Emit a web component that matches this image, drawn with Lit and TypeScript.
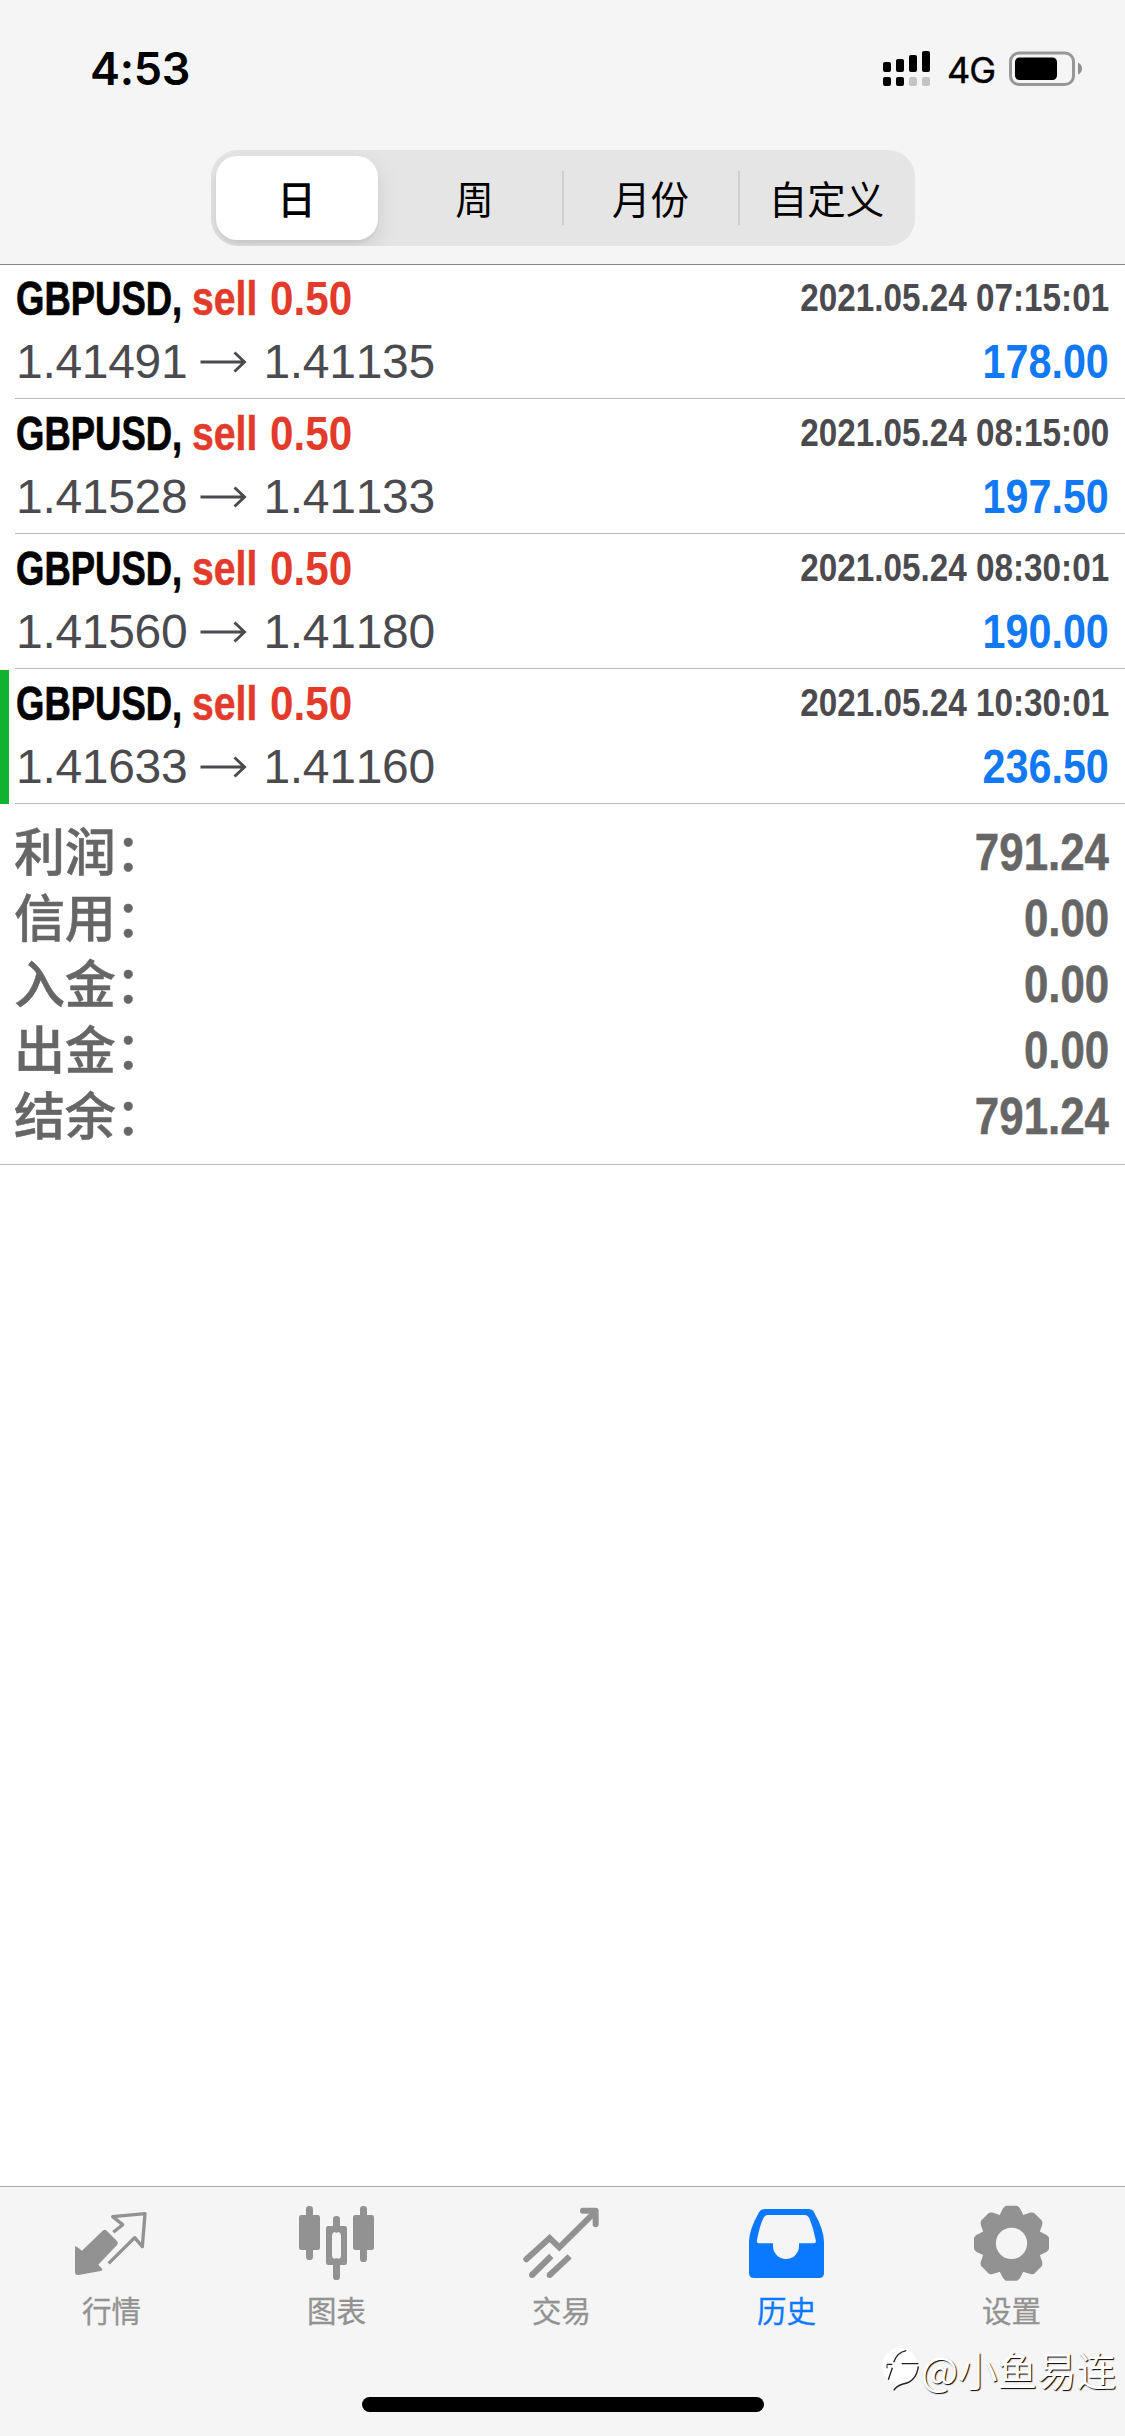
import { LitElement, html, svg, css } from "lit";
import { customElement, property } from "lit/decorators.js";
import { classMap } from "lit/directives/class-map.js";

interface Trade {
  symbol: string;
  side: string;
  volume: string;
  time: string;
  open: string;
  close: string;
  profit: string;
  marked?: boolean;
}

const TRADES: Trade[] = [
  { symbol: "GBPUSD,", side: "sell", volume: "0.50", time: "2021.05.24 07:15:01", open: "1.41491", close: "1.41135", profit: "178.00" },
  { symbol: "GBPUSD,", side: "sell", volume: "0.50", time: "2021.05.24 08:15:00", open: "1.41528", close: "1.41133", profit: "197.50" },
  { symbol: "GBPUSD,", side: "sell", volume: "0.50", time: "2021.05.24 08:30:01", open: "1.41560", close: "1.41180", profit: "190.00" },
  { symbol: "GBPUSD,", side: "sell", volume: "0.50", time: "2021.05.24 10:30:01", open: "1.41633", close: "1.41160", profit: "236.50", marked: true },
];

const SUMMARY = [
  ["利润：", "791.24"],
  ["信用：", "0.00"],
  ["入金：", "0.00"],
  ["出金：", "0.00"],
  ["结余：", "791.24"],
];

const PERIODS = ["日", "周", "月份", "自定义"];

@customElement("status-bar")
class StatusBar extends LitElement {
  static styles = css`
    :host { display: flex; justify-content: space-between; align-items: center; height: 138px; padding: 0 42px 0 90px; box-sizing: border-box; color: #000; }
    .time { font: 600 45px/60px Inter, sans-serif; letter-spacing: -0.3px; }
    .right { display: flex; align-items: center; }
    .network { font: 400 36px/40px Inter, sans-serif; margin: 1px 14px 0 16px; letter-spacing: -1px; -webkit-text-stroke: 0.4px #000; }
    svg { display: block; }
  `;
  render() {
    return html`
      <span class="time">4:53</span>
      <div class="right">
        <svg width="48" height="36" viewBox="0 0 48 36">
          <rect x="0" y="11" width="8" height="10" rx="2" />
          <rect x="13" y="8" width="8" height="13" rx="2" />
          <rect x="26" y="4" width="8" height="17" rx="2" />
          <rect x="39" y="0" width="8" height="21" rx="2" />
          <rect x="0" y="26" width="8" height="9" rx="2" />
          <rect x="13" y="26" width="8" height="9" rx="2" />
          <rect x="26" y="26" width="8" height="9" rx="2" fill="#c4c4c4" />
          <rect x="39" y="26" width="8" height="9" rx="2" fill="#c4c4c4" />
        </svg>
        <span class="network">4G</span>
        <svg width="74" height="36" viewBox="0 0 74 36">
          <rect x="1.5" y="2" width="63" height="31.5" rx="8.5" fill="none" stroke="#979797" stroke-width="3" />
          <rect x="6" y="6.5" width="42" height="22.5" rx="4.5" />
          <path d="M69 11.5q4 2 4 6t-4 6z" fill="#8f8f8f" />
        </svg>
      </div>
    `;
  }
}

@customElement("period-switch")
class PeriodSwitch extends LitElement {
  @property({ type: Number }) selected = 0;
  static styles = css`
    :host { display: grid; grid-template-columns: repeat(4, 1fr); width: 704px; height: 96px; margin: 0 auto; border-radius: 27px; background: #e5e5e6; overflow: hidden; }
    .segment { display: flex; align-items: center; justify-content: center; position: relative; font: 400 38.5px/44px "Noto Sans CJK SC", sans-serif; color: #000; }
    .label { margin-bottom: 3px; }
    .selected { margin: 6px 9px 6px 5px; border-radius: 21px; background: #fff; font-weight: 500; box-shadow: 0 9px 24px rgba(0, 0, 0, 0.1), 0 3px 3px rgba(0, 0, 0, 0.05); }
    .divided::before { content: ""; position: absolute; left: -1px; top: 21px; bottom: 21px; width: 2px; background: #cfcfd2; }
  `;
  render() {
    return PERIODS.map(
      (name, i) => html`<div class=${classMap({ segment: true, selected: i === this.selected, divided: i > this.selected + 1 })}>
        <span class="label">${name}</span>
      </div>`
    );
  }
}

@customElement("trade-row")
class TradeRow extends LitElement {
  @property({ attribute: false }) trade!: Trade;
  static styles = css`
    :host { display: block; height: 135px; padding-left: 15px; box-sizing: border-box; font-family: "Liberation Sans", Arial, sans-serif; font-kerning: none; }
    :host([marked]) { background: linear-gradient(#0fb32f, #0fb32f) 0 1px / 9px 134px no-repeat; }
    .body { height: 135px; padding: 3px 16px 0 1px; box-sizing: border-box; border-bottom: 1px solid #b8b8ba; }
    .line { display: flex; justify-content: space-between; height: 63px; line-height: 63px; font-size: 48px; white-space: nowrap; }
    .title { display: flex; font-weight: 700; }
    .symbol { width: 175.5px; transform: scaleX(0.76); transform-origin: left; -webkit-text-stroke: 0.7px #000; }
    .side { width: 78px; color: #e33b2b; transform: scaleX(0.815); transform-origin: left; -webkit-text-stroke: 0.5px #e33b2b; }
    .volume { color: #e33b2b; transform: scaleX(0.88); transform-origin: left; }
    .time { font-size: 39px; line-height: 61px; font-weight: 700; color: #4b4b4f; transform: scaleX(0.853); transform-origin: right; }
    .prices { display: flex; align-items: center; color: #4b4b4f; letter-spacing: -0.3px; }
    .arrow { margin: 0 15px 0 13px; }
    .profit { font-weight: 700; color: #1279f5; transform: scaleX(0.86); transform-origin: right; }
  `;
  render() {
    const t = this.trade;
    return html`<div class="body">
      <div class="line">
        <div class="title"><span class="symbol">${t.symbol}</span><span class="side">${t.side}</span><span class="volume">${t.volume}</span></div>
        <span class="time">${t.time}</span>
      </div>
      <div class="line">
        <div class="prices">
          <span>${t.open}</span>
          <svg class="arrow" width="48" height="22" viewBox="0 0 48 22" fill="none" stroke="#4b4b4f" stroke-width="2.9">
            <path d="M0.500 11H45M34.500 1.500L44.500 11L34.500 20.500" />
          </svg>
          <span>${t.close}</span>
        </div>
        <span class="profit">${t.profit}</span>
      </div>
    </div>`;
  }
}

const TEETH = [0, 45, 90, 135, 180, 225, 270, 315];

/* Each glyph is drawn in thirds of a pixel inside a 225-unit square. */
const TABS = [
  {
    label: "行情",
    box: "105 108 225 225",
    art: svg`
      <path fill="currentColor" d="M105 232Q105 226 110 230L126 242L188 182Q194 177 200 182L231 213Q236 219 231 225L175 284L186 296Q189 302 182 303L116 315Q105 316 105 306Z" />
      <path fill="none" stroke="currentColor" stroke-width="10" stroke-linejoin="round" d="M220 187L248 164L218 140L315 131L307 230L284 203L206 280" />`,
  },
  {
    label: "图表",
    box: "780 108 225 225",
    art: svg`
      <g fill="currentColor">
        <rect x="798" y="108" width="21" height="162" rx="10" />
        <rect x="777" y="135" width="63" height="105" rx="7" />
        <rect x="960" y="108" width="21" height="168" rx="10" />
        <rect x="939" y="135" width="63" height="105" rx="7" />
        <rect x="879" y="138" width="21" height="50" rx="10" />
        <rect x="879" y="265" width="21" height="65" rx="10" />
        <path fill-rule="evenodd" d="M865 168H914Q921 168 921 175V278Q921 285 914 285H865Q858 285 858 278V175Q858 168 865 168ZM889.500 185Q876 185 876 198V255Q876 268 889.500 268T903 255V198Q903 185 889.500 185Z" />
      </g>`,
  },
  {
    label: "交易",
    box: "136 108 225 225",
    art: svg`
      <g fill="none" stroke="currentColor" stroke-width="18">
        <path stroke-linecap="round" stroke-linejoin="miter" d="M140 268L210 204L239 232L345 127" />
        <path stroke-linecap="round" stroke-linejoin="round" d="M310 122H348V163" />
        <path d="M157 315L215 258M210 315L270 259" />
      </g>
      <circle cx="157" cy="315" r="9" fill="currentColor" />
      <circle cx="210" cy="315" r="9" fill="currentColor" />`,
  },
  {
    label: "历史",
    box: "810 108 225 225",
    active: true,
    art: svg`
      <path fill="currentColor" fill-rule="evenodd" d="M855 117H985Q997 117 1002 127Q1032 180 1032 215V309Q1032 324 1017 324H822Q807 324 807 309V215Q807 180 837 127Q842 117 855 117ZM864 135Q855 135 850 145Q840 165 831 209Q828 220 840 220H879V228A39 39 0 0 0 957 228V220H1000Q1010 220 1007 209Q1000 175 989 147Q984 135 974 135Z" />`,
  },
  {
    label: "设置",
    box: "375 108 225 225",
    art: svg`
      <g transform="translate(484.500 220)" stroke="currentColor">
        <circle r="68.500" fill="none" stroke-width="43" />
        ${TEETH.map((a) => svg`<path transform=${`rotate(${a})`} fill="currentColor" stroke-width="14" stroke-linejoin="round" d="M-15 -105.500H15Q20 -103 24 -92L32 -76H-32L-24 -92Q-20 -103 -15 -105.500Z" />`)}
      </g>`,
  },
];

@customElement("tab-bar")
class TabBar extends LitElement {
  static styles = css`
    :host { display: flex; flex-direction: column; align-items: center; height: 250px; background: #f5f5f5; border-top: 1px solid #a8a8a8; box-sizing: border-box; }
    .tabs { display: grid; grid-template-columns: repeat(5, 1fr); width: 100%; height: 210px; }
    .tab { display: flex; flex-direction: column; align-items: center; padding-top: 19px; color: #929292; }
    .active { color: #0b79fd; }
    .icon { display: block; overflow: visible; }
    .label { margin: 13px 2px 0 0; font: 400 29.5px/30px "Noto Sans CJK SC", sans-serif; -webkit-text-stroke: 0.3px currentColor; }
    .home { width: 402px; height: 15px; border-radius: 8px; background: #000; }
  `;
  render() {
    return html`
      <div class="tabs">
        ${TABS.map(
          (t) => html`<div class=${classMap({ tab: true, active: !!t.active })}>
            <svg class="icon" width="75" height="75" viewBox=${t.box}>${t.art}</svg>
            <span class="label">${t.label}</span>
          </div>`
        )}
      </div>
      <div class="home"></div>
    `;
  }
}

@customElement("app-root")
class AppRoot extends LitElement {
  static styles = css`
    :host { display: flex; flex-direction: column; position: relative; width: 1125px; height: 2436px; background: #fff; overflow: hidden; }
    .header { height: 264px; background: #f5f5f5; box-shadow: 0 1px 0 #868686; position: relative; flex: none; }
    .switch { margin-top: 12px; }
    .summary { padding: 15px 16px 15px 14px; border-bottom: 1px solid #b8b8ba; color: #666; }
    .entry { display: flex; justify-content: space-between; height: 66px; }
    .name { font: 500 51px/60px "Noto Sans CJK SC", sans-serif; letter-spacing: -0.2px; -webkit-text-stroke: 0.5px #666; }
    .value { font: 700 51px/68px "Liberation Sans", Arial, sans-serif; font-kerning: none; transform: scaleX(0.86); transform-origin: right; -webkit-text-stroke: 0.5px #666; }
    .content { flex: 1; }
    .watermark { position: absolute; right: 9px; bottom: 39px; display: flex; align-items: center; color: #fff; font: 400 39.5px/56px "Noto Sans CJK SC", sans-serif; text-shadow: 1px 1px 1px #000; white-space: nowrap; }
    .mark { margin-right: 2px; overflow: visible; }
  `;
  render() {
    return html`
      <div class="header">
        <status-bar></status-bar>
        <period-switch class="switch"></period-switch>
      </div>
      <div class="content">
        ${TRADES.map((t) => html`<trade-row .trade=${t} ?marked=${!!t.marked}></trade-row>`)}
        <div class="summary">
          ${SUMMARY.map(([name, value]) => html`<div class="entry"><span class="name">${name}</span><span class="value">${value}</span></div>`)}
        </div>
      </div>
      <tab-bar></tab-bar>
      <div class="watermark">
        <svg class="mark" width="38" height="44" viewBox="0 0 114 132">
          <circle cx="56" cy="56" r="54" fill="#fff" />
          <path d="M48 92L38 130Q46 118 62 112L80 100Z" fill="#fff" />
          <path d="M18 52H34M38 46Q48 16 76 11M62 50H112M34 62L22 98M112 58Q106 104 66 111Q48 116 38 130" fill="none" stroke="#222" stroke-width="4" />
          <path d="M18 52V64" fill="none" stroke="#222" stroke-width="3" />
        </svg>
        <span>@小鱼易连</span>
      </div>
    `;
  }
}
